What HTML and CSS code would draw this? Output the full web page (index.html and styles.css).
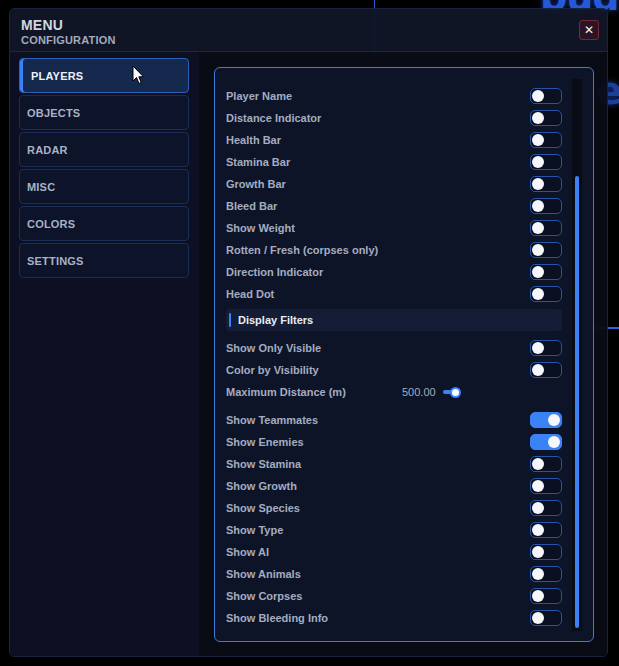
FILE: index.html
```html
<!DOCTYPE html>
<html lang="en">
<head>
<meta charset="utf-8">
<title>Menu</title>
<link rel="stylesheet" href="styles.css">
</head>
<body>
<!-- game scene behind the overlay -->
<div class="scene">
  <div class="scene-word scene-word-top">buds</div>
  <div class="scene-word scene-word-side">e</div>
  <div class="scene-line scene-line-v"></div>
  <div class="scene-line scene-line-h"></div>
</div>

<div class="window">
  <header class="win-head">
    <div class="titles">
      <div class="title">MENU</div>
      <div class="subtitle">CONFIGURATION</div>
    </div>
    <button class="close" type="button">&#x2715;</button>
  </header>

  <div class="win-body">
    <nav class="sidebar">
      <div class="nav-item active">PLAYERS</div>
      <div class="nav-item">OBJECTS</div>
      <div class="nav-item">RADAR</div>
      <div class="nav-item">MISC</div>
      <div class="nav-item">COLORS</div>
      <div class="nav-item">SETTINGS</div>
    </nav>

    <main class="content">
      <section class="panel">
        <div class="list">
          <div class="row"><span class="label">Player Name</span><span class="toggle"></span></div>
          <div class="row"><span class="label">Distance Indicator</span><span class="toggle"></span></div>
          <div class="row"><span class="label">Health Bar</span><span class="toggle"></span></div>
          <div class="row"><span class="label">Stamina Bar</span><span class="toggle"></span></div>
          <div class="row"><span class="label">Growth Bar</span><span class="toggle"></span></div>
          <div class="row"><span class="label">Bleed Bar</span><span class="toggle"></span></div>
          <div class="row"><span class="label">Show Weight</span><span class="toggle"></span></div>
          <div class="row"><span class="label">Rotten / Fresh (corpses only)</span><span class="toggle"></span></div>
          <div class="row"><span class="label">Direction Indicator</span><span class="toggle"></span></div>
          <div class="row"><span class="label">Head Dot</span><span class="toggle"></span></div>

          <div class="section-head"><span class="section-mark"></span>Display Filters</div>

          <div class="row"><span class="label">Show Only Visible</span><span class="toggle"></span></div>
          <div class="row"><span class="label">Color by Visibility</span><span class="toggle"></span></div>
          <div class="row row-slider">
            <span class="label slider-label">Maximum Distance (m)</span>
            <span class="slider-value">500.00</span>
            <span class="slider"><span class="slider-fill"></span><span class="slider-knob"></span></span>
          </div>

          <div class="row"><span class="label">Show Teammates</span><span class="toggle on"></span></div>
          <div class="row"><span class="label">Show Enemies</span><span class="toggle on"></span></div>
          <div class="row"><span class="label">Show Stamina</span><span class="toggle"></span></div>
          <div class="row"><span class="label">Show Growth</span><span class="toggle"></span></div>
          <div class="row"><span class="label">Show Species</span><span class="toggle"></span></div>
          <div class="row"><span class="label">Show Type</span><span class="toggle"></span></div>
          <div class="row"><span class="label">Show AI</span><span class="toggle"></span></div>
          <div class="row"><span class="label">Show Animals</span><span class="toggle"></span></div>
          <div class="row"><span class="label">Show Corpses</span><span class="toggle"></span></div>
          <div class="row"><span class="label">Show Bleeding Info</span><span class="toggle"></span></div>
        </div>
        <div class="scroll-track"><div class="scroll-thumb"></div></div>
      </section>
    </main>
  </div>
</div>

<!-- mouse pointer -->
<svg class="cursor" width="14" height="21" viewBox="0 0 14 21">
  <path d="M1 1 L1 16 L4.5 12.5 L7 18.5 L9.2 17.5 L6.8 11.8 L11.5 11.8 Z" fill="#ffffff" stroke="#000000" stroke-width="1" stroke-linejoin="round"/>
</svg>
</body>
</html>
```

FILE: styles.css
```css
* {
  box-sizing: border-box;
}

html,
body {
  margin: 0;
  width: 619px;
  height: 666px;
  overflow: hidden;
  background: #000000;
}

body {
  position: relative;
  padding: 8px 0 0 9px;
  font-family: "Liberation Sans", Arial, sans-serif;
}

/* ---------- scene behind the overlay ---------- */
.scene {
  position: absolute;
  inset: 0;
  z-index: 0;
}

.scene-word {
  position: absolute;
  color: #2758da;
  font-family: "DejaVu Sans", sans-serif;
  font-weight: bold;
  font-size: 38px;
  line-height: 1;
  letter-spacing: -1px;
  text-shadow: 0 0 6px rgba(37, 86, 214, 0.6);
}

.scene-word-top {
  left: 540px;
  top: -22px;
}

.scene-word-side {
  left: 597px;
  top: 72px;
  color: #1d3f9a;
}

.scene-line {
  position: absolute;
  background: #2a5bd0;
}

.scene-line-v {
  left: 374px;
  top: 0;
  width: 1px;
  height: 60px;
}

.scene-line-h {
  left: 594px;
  top: 327px;
  width: 25px;
  height: 2px;
  background: #2e63de;
}

/* ---------- window ---------- */
.window {
  position: relative;
  z-index: 1;
  width: 599px;
  height: 649px;
  border: 1px solid #17243f;
  border-radius: 5px;
  display: flex;
  flex-direction: column;
  overflow: hidden;
}

.win-head {
  height: 43px;
  flex: none;
  display: flex;
  align-items: flex-start;
  justify-content: space-between;
  padding: 8px 8px 0 11px;
  background: rgba(17, 22, 40, 0.94);
  border-bottom: 1px solid #17294a;
}

.title {
  font-size: 14px;
  line-height: 16px;
  font-weight: bold;
  color: #d2d6e0;
  letter-spacing: 0.2px;
}

.subtitle {
  margin-top: 1px;
  font-size: 11px;
  line-height: 13px;
  font-weight: bold;
  color: #a3abbc;
  letter-spacing: 0.2px;
}

.close {
  margin-top: 3px;
  width: 20px;
  height: 20px;
  padding: 0;
  border: 1px solid #7b2637;
  border-radius: 3px;
  background: #2b1524;
  color: #f2f2f5;
  font-family: "DejaVu Sans", sans-serif;
  font-size: 12px;
  font-weight: bold;
  line-height: 18px;
  text-align: center;
}

.win-body {
  flex: 1;
  display: flex;
  min-height: 0;
}

/* ---------- sidebar ---------- */
.sidebar {
  width: 189px;
  flex: none;
  padding: 6px 10px 0 9px;
  background: rgba(12, 17, 35, 0.96);
  display: flex;
  flex-direction: column;
  gap: 2px;
}

.nav-item {
  height: 35px;
  display: flex;
  align-items: center;
  padding-left: 7px;
  border: 1px solid #1a2d58;
  border-radius: 4px;
  background: #0d1329;
  color: #a9b2c6;
  font-size: 11px;
  font-weight: bold;
  letter-spacing: 0.2px;
}

.nav-item.active {
  padding-left: 11px;
  background: #15284e;
  border-color: #2c5fb6;
  color: #eef1f7;
  box-shadow: inset 3px 0 0 #3b82f6;
}

/* ---------- content ---------- */
.content {
  flex: 1;
  padding: 15px 13px 14px 15px;
  background: rgba(9, 12, 22, 0.95);
  display: flex;
}

.panel {
  flex: 1;
  display: flex;
  border: 1px solid #3b7cdc;
  border-radius: 6px;
  background: #0e1427;
}

.list {
  width: 336px;
  margin-left: 11px;
  padding-top: 17px;
}

.row {
  height: 22px;
  display: flex;
  align-items: center;
  justify-content: space-between;
}

.label {
  font-size: 11px;
  font-weight: bold;
  color: #a4adc0;
}

.toggle {
  position: relative;
  width: 32px;
  height: 16px;
  border: 1px solid #2455a8;
  border-radius: 5px;
  background: #0a1021;
}

.toggle::after {
  content: "";
  position: absolute;
  left: 1px;
  top: 1px;
  width: 12px;
  height: 12px;
  border-radius: 50%;
  background: #f5f7fb;
}

.toggle.on {
  background: #3b82f6;
  border-color: #3b82f6;
}

.toggle.on::after {
  left: auto;
  right: 1px;
}

.section-head {
  height: 22px;
  margin: 4px 0 6px;
  display: flex;
  align-items: center;
  padding-left: 3px;
  border-radius: 4px;
  background: #151d36;
  color: #eaedf4;
  font-size: 11px;
  font-weight: bold;
}

.section-mark {
  width: 2px;
  height: 14px;
  margin-right: 7px;
  background: #3b82f6;
  border-radius: 1px;
}

.row-slider {
  justify-content: flex-start;
  margin-bottom: 6px;
}

.slider-label {
  width: 176px;
  flex: none;
}

.slider-value {
  font-size: 11px;
  color: #a4abba;
}

.slider {
  margin-left: 7px;
  display: flex;
  align-items: center;
}

.slider-fill {
  width: 10px;
  height: 4px;
  border-radius: 2px 0 0 2px;
  background: #3b82f6;
}

.slider-knob {
  width: 11px;
  height: 11px;
  margin-left: -3px;
  border-radius: 50%;
  background: #ffffff;
  border: 2px solid #3b82f6;
}

.scroll-track {
  width: 10px;
  margin: 11px 11px 10px 10px;
  padding: 97px 3px 3px;
  background: #090c17;
}

.scroll-thumb {
  height: 100%;
  border-radius: 2px;
  background: #3b82f6;
}

/* ---------- pointer ---------- */
.cursor {
  position: absolute;
  left: 132px;
  top: 65px;
  z-index: 2;
}
```
